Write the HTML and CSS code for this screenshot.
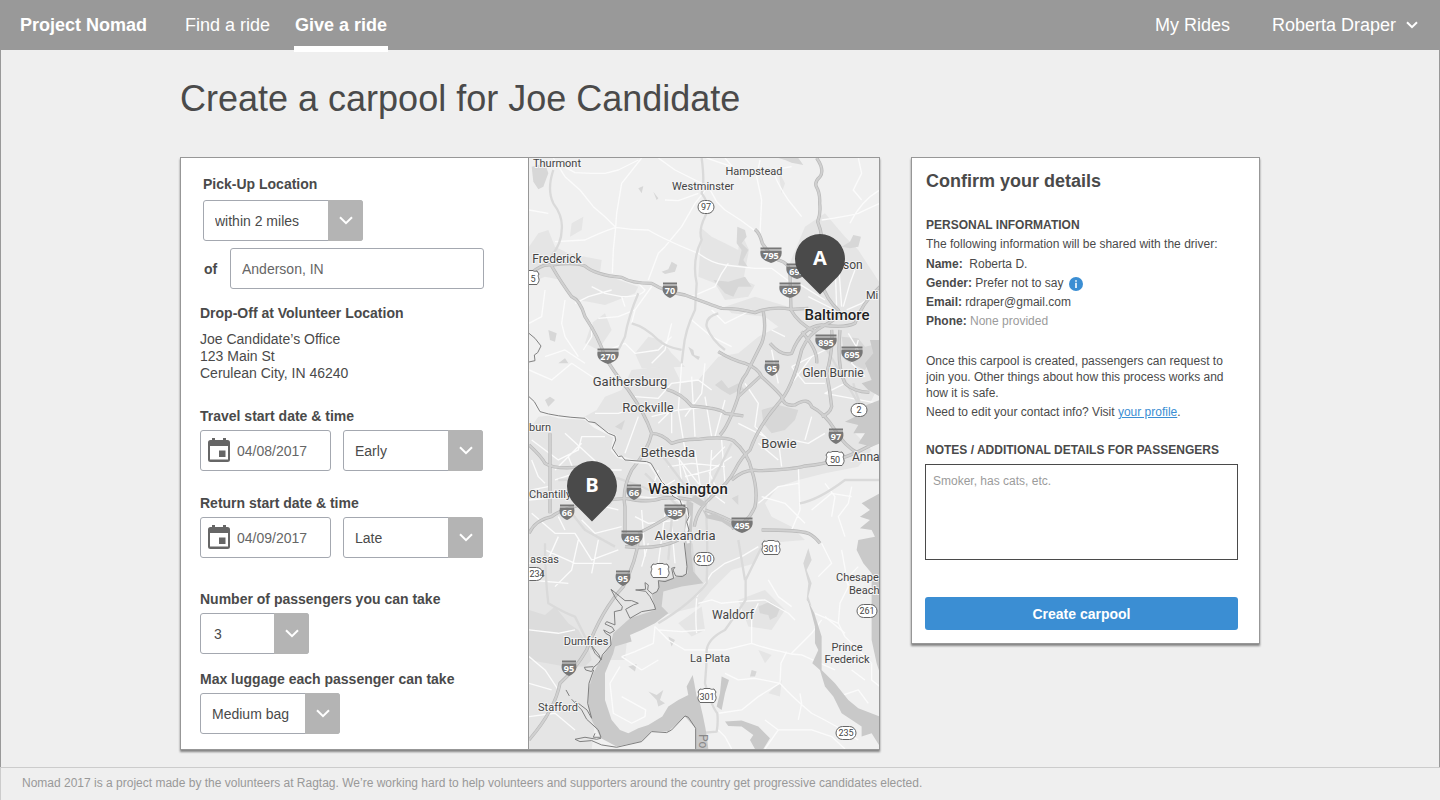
FILE: index.html
```html
<!DOCTYPE html>
<html lang="en">
<head>
<meta charset="utf-8">
<title>Project Nomad – Give a ride</title>
<link rel="stylesheet" href="styles.css">
</head>
<body>
<header class="topbar">
  <a class="brand" href="#">Project Nomad</a>
  <nav class="nav">
    <a class="nav-link" href="#">Find a ride</a>
    <a class="nav-link nav-link-active" href="#">Give a ride</a>
  </nav>
  <a class="nav-link my-rides" href="#">My Rides</a>
  <button class="user-menu" type="button">Roberta Draper
    <svg width="12" height="8" viewBox="0 0 12 8"><path d="M1 1.2l5 5 5-5" fill="none" stroke="#fff" stroke-width="2"/></svg>
  </button>
</header>

<main class="page">
  <div class="content">
    <h1 class="title">Create a carpool for Joe Candidate</h1>
    <form class="columns">
      <section class="card trip">
        <div class="trip-form">
          <div class="pickup">
            <label class="label" for="radius">Pick-Up Location</label>
            <span class="select select-radius">
              <select id="radius"><option>within 2 miles</option></select>
              <span class="arrow"><svg width="14" height="9" viewBox="0 0 14 9"><path d="M1 1.2l6 6 6-6" fill="none" stroke="#fff" stroke-width="2"/></svg></span>
            </span>
            <div class="of-row">
              <label class="label of" for="place">of</label>
              <input class="input place" id="place" type="text" placeholder="Anderson, IN">
            </div>
          </div>

          <div class="dropoff">
            <h2 class="label">Drop-Off at Volunteer Location</h2>
            <address class="address">Joe Candidate’s Office<br>123 Main St<br>Cerulean City, IN 46240</address>
          </div>

          <div class="field travel">
            <label class="label" for="start">Travel start date &amp; time</label>
            <div class="row">
              <span class="date">
                <svg class="calendar" width="24" height="26" viewBox="0 0 24 26"><path fill="#666" fill-rule="evenodd" d="M5 1h3v2h8V1h3v2h1.500a2.500 2.500 0 0 1 2.500 2.500v17a2.500 2.500 0 0 1-2.500 2.500h-17A2.500 2.500 0 0 1 1 22.500v-17A2.500 2.500 0 0 1 3.500 3H5zM3 9v13.500h18V9zM12 13.500h6.500V20H12z"/></svg>
                <input class="input" id="start" type="text" placeholder="04/08/2017">
              </span>
              <span class="select select-time">
                <select aria-label="Travel start time"><option>Early</option></select>
                <span class="arrow"><svg width="14" height="9" viewBox="0 0 14 9"><path d="M1 1.2l6 6 6-6" fill="none" stroke="#fff" stroke-width="2"/></svg></span>
              </span>
            </div>
          </div>

          <div class="field return">
            <label class="label" for="return">Return start date &amp; time</label>
            <div class="row">
              <span class="date">
                <svg class="calendar" width="24" height="26" viewBox="0 0 24 26"><path fill="#666" fill-rule="evenodd" d="M5 1h3v2h8V1h3v2h1.500a2.500 2.500 0 0 1 2.500 2.500v17a2.500 2.500 0 0 1-2.500 2.500h-17A2.500 2.500 0 0 1 1 22.500v-17A2.500 2.500 0 0 1 3.500 3H5zM3 9v13.500h18V9zM12 13.500h6.500V20H12z"/></svg>
                <input class="input" id="return" type="text" placeholder="04/09/2017">
              </span>
              <span class="select select-time">
                <select aria-label="Return start time"><option>Late</option></select>
                <span class="arrow"><svg width="14" height="9" viewBox="0 0 14 9"><path d="M1 1.2l6 6 6-6" fill="none" stroke="#fff" stroke-width="2"/></svg></span>
              </span>
            </div>
          </div>

          <div class="field passengers">
            <label class="label" for="count">Number of passengers you can take</label>
            <span class="select select-count">
              <select id="count"><option>3</option></select>
              <span class="arrow"><svg width="14" height="9" viewBox="0 0 14 9"><path d="M1 1.2l6 6 6-6" fill="none" stroke="#fff" stroke-width="2"/></svg></span>
            </span>
          </div>

          <div class="field luggage">
            <label class="label" for="bag">Max luggage each passenger can take</label>
            <span class="select select-time">
              <select id="bag"><option>Medium bag</option></select>
              <span class="arrow"><svg width="14" height="9" viewBox="0 0 14 9"><path d="M1 1.2l6 6 6-6" fill="none" stroke="#fff" stroke-width="2"/></svg></span>
            </span>
          </div>
        </div>

        <div class="map">
          <svg class="map-art" viewBox="0 0 350 591" preserveAspectRatio="xMidYMid slice" role="img" aria-label="Map of the Washington and Baltimore area">
            <defs>
              <g id="i3"><path d="M-10.500-7.500h21v2h-21z" fill="#777"/><path d="M-10.500-4.500h21c1 6-2 10-10.500 12.500C-8.500 5.500-11.500 1.500-10.500-4.500z" fill="#777"/></g>
              <g id="i2"><path d="M-7-7.500H7v2H-7z" fill="#777"/><path d="M-7-4.500H7c1.500 6-1 10-7 12.500C-6 5.500-8.500 1.500-7-4.500z" fill="#777"/></g>
              <path id="us" d="M-7-7c2 .5 3 .5 4-.5h6c1 1 2 1 4 .5l2 3c-1.500 2-.5 3 0 5s-1 4-2 5.500H-7C-8 5-9.500 3-9 1s1.500-3 0-5z" fill="#fff" stroke="#666"/>
              <rect id="s3" x="-10" y="-6.500" width="20" height="13" rx="6.500" fill="#fff" stroke="#666"/>
              <rect id="s2" x="-8" y="-6.500" width="16" height="13" rx="6.500" fill="#fff" stroke="#666"/>
              <path id="pin" d="M0 35.400L-17.700 17.700A25 25 0 1 1 17.700 17.700z" fill="#4a4a4a"/>
              <g id="freeways">
                <path d="M875 24Q900 60 885 80Q868 95 874 110Q886 130 884 160Q888 190 878 215Q888 240 890 260V400Q905 450 940 480Q950 500 900 525Q850 550 830 600Q800 720 760 760Q700 830 675 900Q650 920 630 960Q610 1000 560 1040Q515 1080 508 1130"/>
                <path d="M12 375Q50 340 80 345Q150 335 180 348Q210 375 290 382Q320 400 380 400Q420 425 480 435Q560 465 590 475Q640 475 690 488Q740 468 800 478L850 475"/>
                <path d="M80 348Q110 400 140 440Q165 450 180 500Q220 560 240 620Q265 665 310 720Q360 790 380 850Q410 850 440 880Q480 866 520 868Q600 858 625 872Q670 910 680 960Q700 1020 690 1070Q670 1120 620 1135"/>
                <path d="M690 238Q705 250 712 280Q730 310 760 330Q795 340 795 370L798 480Q820 520 870 545M715 485Q725 540 710 580Q680 640 665 670Q640 700 640 740M580 605Q620 630 660 640Q700 655 710 680Q760 725 770 740Q775 770 810 765Q850 740 860 770Q900 790 930 840Q960 890 1000 910M830 545Q880 600 875 640M735 580Q770 620 800 610Q830 530 890 525Q960 535 990 520Q1010 460 1065 410M920 540Q925 600 905 670Q915 720 920 770Q915 790 890 800M945 540Q935 650 960 700Q985 725 1033 727"/>
                <path d="M380 850Q370 900 320 960Q290 1020 300 1070V1150M340 1170Q335 1230 295 1310Q230 1380 185 1500Q150 1560 105 1600Q90 1680 12 1770M12 1150Q30 1110 80 1100Q130 1060 300 1045Q370 1060 410 1045Q450 1040 500 1050"/>
                <path d="M12 885Q50 920 60 940Q90 960 180 950M75 850V1090M540 1080Q600 1100 650 1130M620 990Q660 955 700 962Q800 960 840 948Q950 940 1065 870M710 1140Q820 1140 850 1150Q870 1160 885 1180M340 1150Q420 1110 460 1080M300 1190Q400 1200 460 1170M425 718Q470 730 500 768Q590 775 600 790L655 798M585 855Q610 830 640 740L705 680"/>
              </g>
            </defs>
            <rect width="350" height="591" fill="#f0f0f0"/>
            <g transform="translate(-4 -8) scale(.3333)">
              <!-- built-up areas -->
              <g fill="#e5e5e5">
                <path d="M12 840L40 800 90 795 170 805 215 780 240 740 290 720 320 660 400 650 440 640 470 700 520 690 580 620 640 610 700 560 760 530 720 500 620 490 600 470 690 440 740 455 790 470 810 420 790 350 840 230 900 190 960 260 1000 300 1065 400V700L1020 790 990 850 1040 900 1000 950 900 970 820 990 760 1010 720 1060 740 1100 800 1130 840 1170 720 1180 690 1240 620 1260 560 1320 520 1370 400 1400 330 1420 230 1560 200 1797H12z"/>
                <path d="M12 290L40 250 70 240 90 290 130 310 180 320 230 330 225 370 340 410 330 430 240 465 190 455 150 450 110 390 60 380 12 400zM530 235L560 260 600 280 640 300 645 240 672 300 655 390 690 405 670 440 600 450 570 400 520 380zM140 220L175 200 170 240 135 260zM850 240L880 215 890 250z"/>
                <path d="M200 520L240 490 260 540 220 600 180 580zM370 560L410 570 440 610 480 650 350 655 330 610zM640 1350L720 1320 780 1380 740 1440 670 1430z"/>
                <path d="M260 1450L310 1430 300 1530 250 1530zM730 1630L770 1590 765 1640zM460 1420L530 1370 540 1440 500 1460zM700 1500L740 1515 720 1540zM760 60L780 100 770 130z"/>
              </g>
              <!-- parks -->
              <g fill="#d7d7d7">
                <path d="M20 50L60 40 70 70 55 110 40 118 25 95zM760 24H820L835 45 800 38 780 30zM410 365L430 358 440 335 457 345 450 365 420 372zM710 780L760 765 820 780 810 810 780 840 740 850 715 820zM950 560L1000 565 1020 590 1065 580 1020 660 960 630z"/>
                <path d="M637 230L660 240 665 260 650 280 670 300 655 330 668 350 640 345 650 300 635 280zM565 390L610 395 660 380 680 410 640 410 625 440 600 430zM700 1370L735 1355 765 1375 755 1400 735 1410 730 1395 705 1390zM950 290L975 275 985 255 1008 260 1000 290 975 295zM70 540L95 550 90 575 75 570zM310 1550L335 1542 330 1565z"/>
                <path d="M12 1380L60 1395 90 1370 130 1420 160 1440 190 1490 200 1530 180 1550 120 1550 12 1530z" fill="#dcdcdc"/>
                <path d="M60 750L75 740 90 750 70 770zM100 640L120 625 130 640zM620 1045L640 1035 640 1065zM570 705L590 690 610 715 640 700 660 720 640 722 615 735 590 720zM490 590L505 600 508 615 525 620 520 630 500 615zM270 830L300 810 290 840zM385 125L400 145 395 150zM340 115L355 108 350 130z"/>
                <path d="M850 1195L860 1230 845 1260 860 1300 850 1340 860 1370 845 1350 850 1300 835 1240zM370 1625L395 1635 415 1620 405 1650 420 1660 400 1670 395 1650zM680 1560L695 1565 690 1580 675 1580zM430 1460L450 1470 440 1490z"/>
              </g>
              <!-- local roads -->
              <g fill="none" stroke="#fbfbfb" stroke-width="4" stroke-linejoin="round">
                <path d="M85 24L120 80 165 120 205 170 240 200 272 232Q320 240 370 240Q420 270 520 310Q560 340 600 345L690 355 740 355 800 400M272 232L275 190 290 100 350 24M272 232Q220 250 180 270L90 275M272 232L265 300 262 370M400 24L450 60 550 110 575 155 600 180Q650 210 700 250M705 30L695 80 710 150 705 250M745 60Q750 90 790 150L830 200M550 110L510 160 470 230 420 290 400 310 370 390M890 210Q960 200 1000 190Q1020 180 1065 160M1065 120Q1010 150 975 220M1000 24L1010 70 985 120 1010 150M12 180L70 190M100 40L150 68 200 70 240 70 280 60 340 30M420 150L460 152 520 130M600 24L640 70 690 72 740 60 800 50M545 24L620 50 650 90"/>
                <path d="M290 440Q350 440 360 420L335 395M500 510L560 560 620 590M60 420L50 500 12 520M120 450L110 520 120 560 160 620M260 420L190 440 150 460M560 480L600 520 680 480M610 340L590 370 570 410 500 440M850 440L930 480M950 470L940 330M935 470L930 330M955 470L975 400 990 360M965 480L1010 460 1040 440M900 450L820 400M220 505L280 500 330 480 380 410M330 480L320 520M200 410L240 430 290 440 300 470"/>
                <path d="M12 660L80 690 140 640 230 700M60 620L120 600 180 640M210 790L280 790 340 770M300 910L340 800M470 640L460 780 480 900M540 640L530 730 480 800M600 750L570 860M20 870L100 930 160 900 170 860 240 860M90 960L170 880M120 850L240 960M560 900L550 1060M440 900L520 1000 600 1060M700 880L760 930M590 870L600 1000M900 600L800 650M740 600L760 700M960 700L900 730 1060 760"/>
                <path d="M175 600L200 560 200 520M250 600L300 580 330 610 400 600 440 560M380 640L420 600 440 520M330 740L400 745 440 700 520 690 560 720M380 800L460 780 560 770M500 680L510 860M540 740L560 860M400 820L440 780 440 850M660 700L700 760 690 830 740 880M640 820L720 860M760 870L770 950M800 870L850 880 900 850M860 800L840 870M800 650L840 700 900 700M860 620L800 700M780 560L740 540M1000 570L980 640 1020 680M970 550L1000 600"/>
                <path d="M820 950L825 1080 800 1140M860 1080L920 1030 980 1040M980 1010L970 1060 940 1100 960 1160M900 1000L930 1040 920 1100M840 1120L780 1060 710 1040M700 1060L760 1010 820 1000M20 1090L90 1150 150 1150 200 1230 280 1200M100 1160L60 1250M60 1200L150 1240 260 1240M160 1170L140 1260 90 1310M220 1170L200 1270M12 1240L100 1230M12 1290L130 1300M420 1090L400 1240M350 1080L360 1220M500 1080L460 1050 340 1040M12 1050L120 1040 280 1080"/>
                <path d="M90 990L150 970 130 920M20 930L40 980 60 1000M20 1020L70 1010M140 1050L150 980M220 1050L230 960 290 960M320 1010L400 1020 450 990M330 1100L370 1120 460 1110M400 960L380 1020M430 950L500 940 600 950M460 900L470 1000M510 900L530 1040M550 960L580 1030M480 980L560 960 620 920M600 890L560 930M470 940L500 1020M440 1130L450 1240M370 1180L350 1250M100 1100L120 1140M170 1110L210 1150 290 1130"/>
                <path d="M515 1345Q510 1400 515 1450M515 1340L560 1270 600 1240 650 1220 700 1190M520 1360L560 1350 590 1360 640 1355 720 1350 790 1390 810 1410M680 1480Q720 1495 770 1505Q800 1515 830 1515L930 1560M785 1505L768 1540 765 1600Q800 1640 860 1690Q940 1730 1000 1770M765 1600L690 1585 640 1590 600 1570M680 1480L600 1500 480 1500 430 1470 390 1430 385 1480 330 1505 290 1520M540 1440L470 1445 400 1440M700 1360L680 1400 680 1480M580 1690L650 1680 700 1640 765 1600M580 1740L600 1760 620 1797M950 1200L970 1310 945 1360 940 1420 960 1460 1000 1500 1040 1540 1040 1590 1065 1610M890 1180L920 1240 880 1280M820 1710L830 1660 825 1630M870 1390L940 1420M800 1510L860 1450 890 1410M760 1740L720 1797M720 1710L760 1740 860 1740 920 1760 960 1797M730 1290L760 1340 800 1370"/>
                <path d="M285 1550L255 1600 265 1690 320 1720 360 1700 362 1680 290 1640M290 1520L350 1560 400 1530M12 1520L60 1560 100 1620M12 1600L80 1620M12 1700L90 1690 150 1740M12 1440L100 1450 150 1440M1000 1250L960 1290 990 1330M900 1400L960 1450M980 1560L1020 1590M940 1640L1000 1620 1030 1660"/>
              </g>
              <g fill="none" stroke="#dadada" stroke-width="7" stroke-linejoin="round">
                <path d="M530 24Q540 100 530 130Q560 170 540 200Q520 240 530 270Q500 330 515 400L510 480Q480 540 475 600L470 640M85 60Q65 120 85 160Q115 200 110 240Q110 290 60 340M320 520Q360 530 400 570Q420 590 470 600M340 430Q310 500 300 560L280 600M580 490Q540 500 545 530Q560 570 600 600M60 1180Q60 1280 70 1360Q120 1390 150 1400L200 1500M540 1040Q550 1150 545 1300Q500 1360 400 1420M720 1170L662 1290V1350Q630 1400 600 1440Q550 1465 545 1500Q545 1550 540 1600Q560 1670 577 1690Q580 1720 575 1745L520 1750M640 1170L660 1290M825 1060Q880 1050 960 990H1065M900 590L1000 760 1065 870M985 700Q1000 760 1040 830"/>
                <path d="M100 990L280 985 350 1010 420 1040 500 1050M100 1040L260 1060M140 1090L180 1140 270 1190M360 970L480 1090M400 900L520 1060M620 880L560 1000M500 1180L510 1300M440 1110L430 1230"/>
              </g>
              <g fill="none" stroke="#b9b9b9" stroke-width="10" stroke-linejoin="round"><use href="#freeways"/></g>
              <g fill="none" stroke="#d0d0d0" stroke-width="6" stroke-linejoin="round"><use href="#freeways"/></g>
              <!-- rivers and bay -->
              <g fill="#c9c9c9">
                <path d="M1065 570H1035L1045 610 1020 640 1040 690 1010 700 1030 720 1065 740zM1065 750L1010 770 990 800 960 815 1000 825 985 850 1020 850 1000 880 1040 890 1065 880zM1065 1030L1010 1060 1035 1080 1005 1100 1035 1110 1005 1135 1040 1140 1050 1160 1000 1170 995 1200 1015 1240 1040 1270 1040 1470 1055 1540 1065 1570z"/>
                <path d="M478 1150L488 1270 440 1285 400 1295 398 1320 380 1335 390 1380 315 1405 265 1450 255 1490 232 1520 205 1570 190 1620 190 1670 200 1710 228 1765 275 1790 350 1775 380 1745 430 1745 480 1700 512 1735V1797H550Q545 1740 525 1660L515 1640 508 1600 503 1575 485 1610 490 1635 460 1650 430 1670 412 1700 370 1725 340 1735 310 1750 285 1740 260 1710 240 1650 240 1570 265 1510 270 1490 320 1475 315 1455 350 1440 390 1420 430 1390 410 1370 415 1325 470 1310 535 1300 505 1265 498 1200 505 1060 485 1050z"/>
                <path d="M848 1350Q855 1370 870 1430L870 1480 880 1500 862 1540 885 1560 900 1610 925 1640 950 1690 1010 1730 1010 1760 1040 1750 1065 1790V1700L1000 1675 970 1650 930 1600 890 1560 890 1460 868 1390zM600 1715L650 1712 700 1730 735 1765 715 1797H690L675 1770 685 1755 650 1730 610 1728zM590 1580L612 1590 600 1630 590 1680 575 1670 585 1630z"/>
                <path d="M530 1075L550 1095 570 1090 600 1110 630 1125 650 1140 620 1135 590 1115 545 1105zM495 1050L510 1035 545 1060 530 1070z"/>
              </g>
              <!-- state line -->
              <path d="M12 740L45 785 100 800 180 805 210 830 270 860 262 900 280 920 330 935 372 938 410 995 440 1030 480 1070 492 1100 485 1140 490 1180" fill="none" stroke="#f4f4f4" stroke-width="9" stroke-linejoin="round"/>
              <g fill="none" stroke="#808080" stroke-width="3" stroke-linejoin="round">
                <path d="M12 550L30 565 48 588 38 608 28 615 30 632 12 636M12 740L28 755 45 785Q90 800 180 805L190 815 210 818 250 850 270 858 272 870 262 895 280 920 290 918 300 930 365 935 378 940 410 995 425 1010 445 1040 465 1050 470 1065 488 1075 492 1100 485 1115 492 1140 480 1165M478 1178L486 1250 484 1272 472 1280 452 1278 444 1260 450 1252 440 1255 446 1285 420 1295 400 1292 402 1312 396 1325 382 1332 368 1320 370 1305 360 1298 362 1318 332 1320 362 1324 375 1340 388 1365 392 1378 350 1385 315 1405 302 1378 325 1365 340 1360 320 1352 300 1352 258 1318 272 1345 292 1370 290 1380 268 1385 270 1425 245 1415 240 1422 262 1432 268 1442 255 1450 236 1440 242 1450 256 1458 258 1485 232 1515 228 1530 222 1515 198 1485 210 1510 228 1528 220 1540 206 1552 200 1565 182 1560 178 1552 205 1550M206 1560L192 1600 188 1660 200 1705 186 1680 160 1660 150 1655M140 1648L170 1680 185 1708 220 1740 228 1762 205 1762 210 1750M228 1765L215 1768 180 1762 150 1768 165 1775 200 1772 230 1785 275 1792 350 1775 380 1745 425 1748 440 1740 480 1698 490 1702 512 1735V1797M123 1620L133 1638"/>
              </g>
            </g>

            <g class="city" text-anchor="middle">
              <g class="city-sm">
                <text x="28" y="9">Thurmont</text><text x="225" y="17">Hampstead</text><text x="174" y="32">Westminster</text>
                <text x="57" y="487">Dumfries</text><text x="181" y="504">La Plata</text><text x="318" y="493">Prince</text><text x="318" y="505">Frederick</text><text x="29" y="553">Stafford</text>
              </g>
              <g class="city-md">
                <text x="28" y="105">Frederick</text><text x="304" y="219">Glen Burnie</text><text x="204" y="461">Waldorf</text>
              </g>
              <g class="city-lg">
                <text x="101" y="228">Gaithersburg</text><text x="119" y="254">Rockville</text><text x="250" y="290">Bowie</text><text x="139" y="299">Bethesda</text><text x="156" y="382">Alexandria</text>
              </g>
              <g class="city-xl"><text x="308" y="162">Baltimore</text><text x="159" y="336">Washington</text></g>
            </g>
            <g class="city city-sm">
              <text x="337" y="141">Mi</text><text x="0" y="273">burn</text><text x="0" y="340">Chantilly</text><text x="1" y="405">assas</text><text x="307" y="423">Chesape</text><text x="320" y="436">Beach</text>
            </g>
            <g class="city city-md"><text x="314" y="111">son</text><text x="323" y="303">Anna</text></g>
            <text class="river" transform="translate(170 576) rotate(90)">Po</text>

            <g class="shield-dark" text-anchor="middle">
              <g transform="translate(242 97)"><use href="#i3"/><text y="4">795</text></g>
              <g transform="translate(268 113)"><use href="#i3"/><text y="4">695</text></g>
              <g transform="translate(261 132)"><use href="#i3"/><text y="4">695</text></g>
              <g transform="translate(141 132)"><use href="#i2"/><text y="4">70</text></g>
              <g transform="translate(297 184)"><use href="#i3"/><text y="4">895</text></g>
              <g transform="translate(323 196)"><use href="#i3"/><text y="4">695</text></g>
              <g transform="translate(243 210)"><use href="#i2"/><text y="4">95</text></g>
              <g transform="translate(79 198)"><use href="#i3"/><text y="4">270</text></g>
              <g transform="translate(307 278)"><use href="#i2"/><text y="4">97</text></g>
              <g transform="translate(105 334)"><use href="#i2"/><text y="4">66</text></g>
              <g transform="translate(38 354)"><use href="#i2"/><text y="4">66</text></g>
              <g transform="translate(146 354)"><use href="#i3"/><text y="4">395</text></g>
              <g transform="translate(213 367)"><use href="#i3"/><text y="4">495</text></g>
              <g transform="translate(103 380)"><use href="#i3"/><text y="4">495</text></g>
              <g transform="translate(94 420)"><use href="#i2"/><text y="4">95</text></g>
              <g transform="translate(40 510)"><use href="#i2"/><text y="4">95</text></g>
            </g>
            <g class="shield-light" text-anchor="middle">
              <g transform="translate(177 49)"><use href="#s2"/><text y="3">97</text></g>
              <g transform="translate(330 252)"><use href="#s2"/><text y="3">2</text></g>
              <g transform="translate(175 401)"><use href="#s3"/><text y="3">210</text></g>
              <g transform="translate(4 416)"><use href="#s3"/><text x="4" y="3">234</text></g>
              <g transform="translate(338 453)"><use href="#s3"/><text y="3">261</text></g>
              <g transform="translate(317 575)"><use href="#s3"/><text y="3">235</text></g>
              <g transform="translate(1 120)"><use href="#us"/><text x="3" y="4">5</text></g>
              <g transform="translate(306 301)"><use href="#us"/><text y="4">50</text></g>
              <g transform="translate(242 390)"><use href="#us"/><text y="4">301</text></g>
              <g transform="translate(131 413)"><use href="#us"/><text y="4">1</text></g>
              <g transform="translate(178 538)"><use href="#us"/><text y="4">301</text></g>
            </g>
            <g class="pin" text-anchor="middle">
              <g transform="translate(291 101)"><use href="#pin"/><text y="6">A</text></g>
              <g transform="translate(63 328)"><use href="#pin"/><text y="6">B</text></g>
            </g>
          </svg>
        </div>
      </section>

      <section class="card confirm">
        <h2 class="confirm-title">Confirm your details</h2>
        <h3 class="caps">Personal information</h3>
        <p class="line">The following information will be shared with the driver:</p>
        <div class="details">
          <p class="line"><b>Name:</b>&nbsp; Roberta D.</p>
          <p class="line line-icon"><span><b>Gender:</b> Prefer not to say</span>
            <svg width="14" height="14" viewBox="0 0 14 14"><circle cx="7" cy="7" r="7" fill="#3b8ed3"/><path d="M6.200 5.800h1.600V11H6.200zM6.200 3.200h1.600v1.600H6.200z" fill="#fff"/></svg>
          </p>
          <p class="line"><b>Email:</b> rdraper@gmail.com</p>
          <p class="line"><b>Phone:</b> <span class="muted">None provided</span></p>
        </div>
        <p class="note">Once this carpool is created, passengers can request to join you. Other things about how this process works and how it is safe.</p>
        <p class="line contact">Need to edit your contact info? Visit <a class="link" href="#">your profile</a>.</p>
        <label class="caps notes-label" for="notes">Notes / additional details for passengers</label>
        <textarea class="notes" id="notes" placeholder="Smoker, has cats, etc."></textarea>
        <button class="submit" type="submit">Create carpool</button>
      </section>
    </form>
  </div>
</main>

<footer class="footer">Nomad 2017 is a project made by the volunteers at Ragtag. We’re working hard to help volunteers and supporters around the country get progressive candidates elected.</footer>
</body>
</html>
```

FILE: styles.css
```css
*, *::before, *::after { box-sizing: border-box; }
body {
  margin: 0;
  min-height: 100vh;
  display: flex;
  flex-direction: column;
  background: #efefef;
  color: #4a4a4a;
  font-family: "Liberation Sans", Arial, sans-serif;
  font-size: 14px;
}
h1, h2, h3, p { margin: 0; }
button, input, select, textarea { font: inherit; color: inherit; }

.topbar {
  display: flex;
  align-items: center;
  height: 50px;
  padding: 0 22px 0 20px;
  background: #999;
  color: #fff;
  font-size: 18px;
}
.topbar a { color: inherit; text-decoration: none; }
.brand { width: 165px; font-weight: bold; }
.nav { display: flex; gap: 24px; flex: 1; }
.nav-link { line-height: 50px; }
.nav-link-active { position: relative; padding: 0 1px; font-weight: bold; }
.nav-link-active::after {
  content: "";
  position: absolute;
  left: 0;
  right: 0;
  bottom: -2px;
  height: 6px;
  background: #fff;
}
.my-rides { margin-right: 42px; }
.user-menu {
  display: flex;
  align-items: center;
  gap: 10px;
  padding: 0;
  border: 0;
  background: none;
}

.page {
  flex: 1;
  padding: 0 24px 17px;
  border: 1px solid #999;
  border-width: 0 1px;
}
.content { max-width: 1080px; margin: 0 auto; }
.title {
  padding: 28px 0 37px;
  font-size: 36px;
  font-weight: normal;
  line-height: 42px;
}
.columns {
  display: grid;
  grid-template-columns: 700fr 349fr;
  gap: 31px;
  align-items: start;
}
.card {
  border: 1px solid #979797;
  background: #fff;
  box-shadow: 0 2px 2px rgba(0, 0, 0, .45);
}

.trip { display: grid; grid-template-columns: 347fr 351fr; }
.trip-form { padding: 16px 18px 15px 19px; }
.map { border-left: 1px solid #979797; overflow: hidden; }
.map-art { display: block; width: 100%; height: 100%; }

.label { display: block; font-size: 14px; font-weight: bold; line-height: 20px; }
.pickup { padding-left: 3px; }
.pickup .select { margin-top: 6px; }
.of-row { display: flex; align-items: center; margin-top: 7px; }
.of { width: 27px; padding-left: 1px; }
.dropoff { margin-top: 14px; }
.address { margin-top: 8px; font-style: normal; line-height: 17px; }
.travel { margin-top: 24px; }
.return { margin-top: 22px; }
.passengers { margin-top: 31px; }
.luggage { margin-top: 15px; }
.row { display: flex; gap: 12px; }
.field .select, .date { margin-top: 4px; }

.input, .select select {
  display: block;
  width: 100%;
  height: 41px;
  border: 1px solid #a4a8b0;
  border-radius: 3px;
  background: #fff;
}
.input { padding: 0 11px; }
.input::placeholder { color: #666; opacity: 1; }
.place { width: 254px; }
.date { position: relative; display: block; width: 131px; }
.date .input { padding-left: 36px; }
.calendar { position: absolute; left: 7px; top: 7px; }
.select { position: relative; display: block; }
.select select { padding: 0 36px 0 11px; appearance: none; }
.select-radius { width: 160px; }
.select-time { width: 140px; }
.select-count { width: 109px; }
.select-count select { padding-left: 13px; }
.arrow {
  position: absolute;
  top: 0;
  right: 0;
  bottom: 0;
  display: flex;
  align-items: center;
  justify-content: center;
  width: 35px;
  border-radius: 0 3px 3px 0;
  background: #b4b4b4;
  pointer-events: none;
}

.city { font-family: Roboto, sans-serif; fill: #444; stroke: #f4f4f4; stroke-width: 2px; paint-order: stroke; }
.city-sm { font-size: 11px; }
.city-md { font-size: 12px; }
.city-lg { font-size: 13px; }
.city-xl { font-size: 15px; font-weight: 500; fill: #222; }
.river { font-family: Roboto, sans-serif; font-size: 12px; fill: #888; }
.shield-dark { font-family: "Open Sans", sans-serif; font-size: 9px; font-weight: bold; fill: #fff; }
.shield-light { font-family: Roboto, sans-serif; font-size: 9px; fill: #444; }
.pin { font-family: "Open Sans", sans-serif; font-size: 20px; font-weight: bold; fill: #fff; }

.confirm { padding: 11px 21px 13px 13px; font-size: 12px; }
.confirm-title { padding-left: 1px; font-size: 18px; line-height: 24px; margin-bottom: 23px; }
.caps { display: block; padding-left: 1px; font-size: 12px; font-weight: bold; line-height: 19px; text-transform: uppercase; }
.line { padding-left: 1px; line-height: 19px; }
.details { margin-top: 1px; }
.line-icon { display: flex; align-items: center; gap: 6px; }
.muted { color: #9b9b9b; }
.note { margin-top: 22px; padding-left: 1px; line-height: 16px; }
.contact { margin-top: 2px; }
.link { color: #3b8ed3; }
.notes-label { margin-top: 19px; }
.notes {
  display: block;
  width: 100%;
  height: 96px;
  margin-top: 4px;
  padding: 9px 7px;
  border: 1px solid #4a4a4a;
  background: #fff;
  resize: none;
}
.notes::placeholder { color: #9b9b9b; opacity: 1; }
.submit {
  display: block;
  width: 100%;
  height: 33px;
  margin-top: 37px;
  border: 0;
  border-radius: 3px;
  background: #3b8ed3;
  color: #fff;
  font-size: 14px;
  font-weight: bold;
}

.footer {
  padding: 7px 21px 8px;
  border-top: 1px solid #ccc;
  border-left: 1px solid #ccc;
  color: #999;
  font-size: 12px;
  line-height: 17px;
}
```
